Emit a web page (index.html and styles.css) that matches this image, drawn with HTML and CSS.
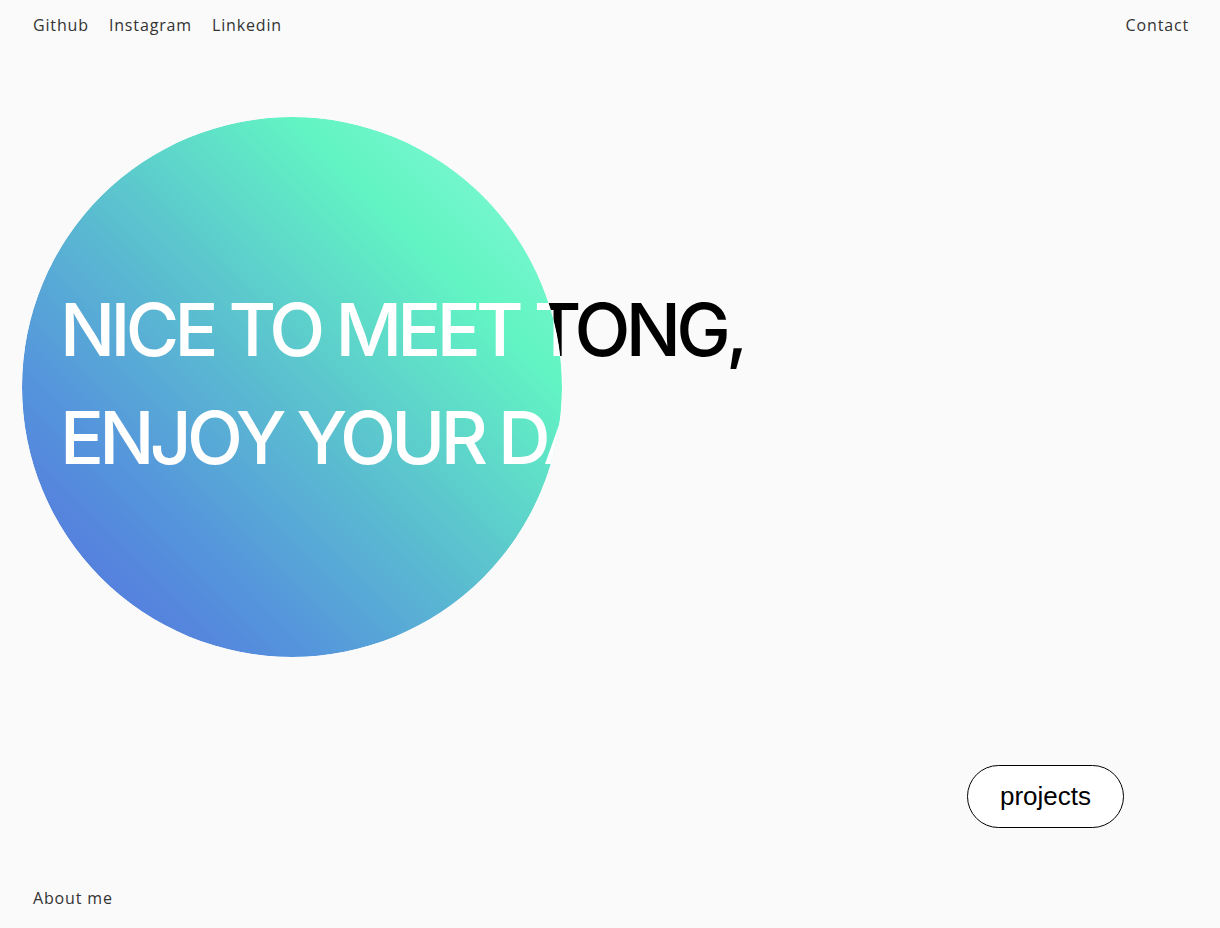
FILE: index.html
```html
<!DOCTYPE html>
<html lang="en">
<head>
<meta charset="utf-8">
<title>Tong</title>
<link rel="stylesheet" href="styles.css">
</head>
<body>
<div class="page">
  <header class="nav">
    <nav class="nav-links">
      <a class="nav-link" href="#">Github</a>
      <a class="nav-link" href="#">Instagram</a>
      <a class="nav-link" href="#">Linkedin</a>
    </nav>
    <a class="nav-link" href="#">Contact</a>
  </header>
  <main class="hero">
    <h1 class="headline">
      <span class="line line-1">NICE TO MEET TONG,</span>
      <span class="line line-2">ENJOY YOUR DAY</span>
    </h1>
    <div class="cta-row">
      <a class="btn" href="#">projects</a>
    </div>
    <div class="orb-layer" aria-hidden="true">
      <div class="orb"></div>
      <div class="headline headline-copy">
        <span class="line">NICE TO MEET TONG,</span>
        <span class="line">ENJOY YOUR DAY</span>
      </div>
    </div>
  </main>
  <footer class="footer">
    <a class="nav-link" href="#">About me</a>
  </footer>
</div>
</body>
</html>
```
FILE: styles.css
```css
* { box-sizing: border-box; }
html, body { margin: 0; padding: 0; }
body {
  background: #fafafa;
  font-family: "Open Sans", "Liberation Sans", sans-serif;
  color: #333;
}
.page {
  height: 928px;
  display: flex;
  flex-direction: column;
  overflow: hidden;
}
.nav {
  height: 50px;
  padding: 0 31px 0 33px;
  display: flex;
  align-items: center;
  justify-content: space-between;
}
.nav-links {
  display: flex;
  gap: 20px;
}
.nav-link {
  font-size: 16px;
  line-height: 20px;
  color: #333;
  text-decoration: none;
  letter-spacing: 0.85px;
}
.hero {
  position: relative;
  flex: 1;
  padding: 226px 0 0 0;
  display: flex;
  flex-direction: column;
}
.headline {
  margin: 0;
  padding-left: 60px;
  font-family: "Inter", "Liberation Sans", sans-serif;
  font-weight: 500;
  font-size: 73px;
  line-height: 108px;
  letter-spacing: -4.7px;
}
.line { display: block; white-space: nowrap; }
.line-1 { color: #000; }
.line-2 { color: #fafafa; }
.cta-row {
  display: flex;
  justify-content: flex-end;
  padding-right: 96px;
  margin-top: 273px;
}
.btn {
  display: inline-block;
  padding: 15px 32px;
  font-family: "Liberation Sans", Arial, sans-serif;
  font-size: 26px;
  line-height: 31px;
  color: #000;
  text-decoration: none;
  background: #fff;
  border: 1px solid #000;
  border-radius: 32px;
}
.orb-layer {
  position: absolute;
  inset: 0;
  padding-top: 226px;
  clip-path: circle(270px at 292px 337px);
  pointer-events: none;
}
.orb {
  position: absolute;
  left: 22px;
  top: 67px;
  width: 540px;
  height: 540px;
  border-radius: 50%;
  background: linear-gradient(45deg, #4d72e2 0%, #5583dd 16%, #5595dc 27%, #5bc1cf 50%, #62f4c3 75%, #72f6cb 85%, #8cfad8 100%);
}
.headline-copy { position: relative; }
.headline-copy .line { color: #fff; }
.footer {
  height: 60px;
  padding: 0 33px;
  display: flex;
  align-items: center;
}
```
